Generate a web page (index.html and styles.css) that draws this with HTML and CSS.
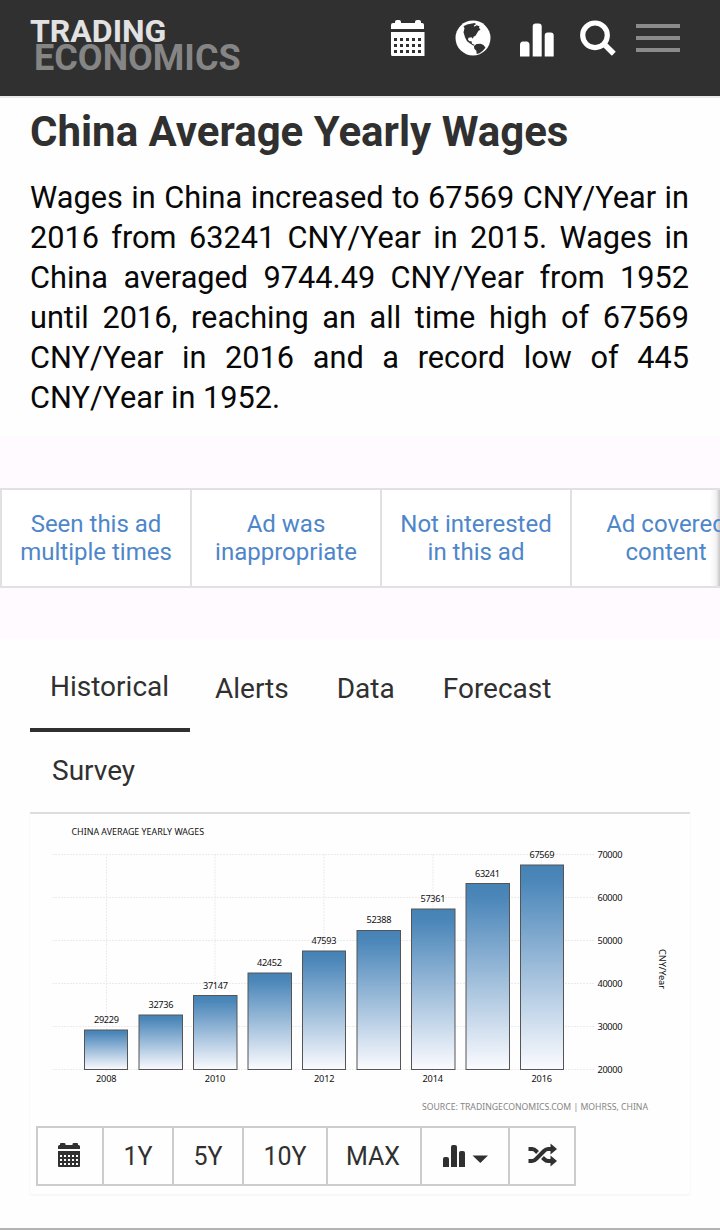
FILE: index.html
```html
<!DOCTYPE html>
<html lang="en">
<head>
<meta charset="utf-8">
<title>China Average Yearly Wages</title>
<link rel="stylesheet" href="styles.css">
</head>
<body>
<header class="topbar">
  <div class="logo"><span class="logo-top">TRADING</span><span class="logo-bottom">ECONOMICS</span></div>
  <nav class="top-icons">
    <svg class="i-cal" width="34" height="37" viewBox="0 0 34 37" fill="#fff"><path d="M0 9V5q0-2 2-2h2V2q0-2 2-2h2q2 0 2 2v1h14V2q0-2 2-2h2q2 0 2 2v1h1q2 0 2 2v4z"/><path fill-rule="evenodd" d="M0 12h33.500V36H1.500Q0 36 0 34.500zM3 18v3h3v-3zm6 0v3h3v-3zm6 0v3h3v-3zm6 0v3h3v-3zm6 0v3h3v-3zM3 24v3h3v-3zm6 0v3h3v-3zm6 0v3h3v-3zm6 0v3h3v-3zm6 0v3h3v-3zM3 30v3h3v-3zm6 0v3h3v-3zm6 0v3h3v-3zm6 0v3h3v-3zm6 0v3h3v-3z"/></svg>
    <svg class="i-globe" width="36" height="36" viewBox="0 0 36 36"><circle cx="18" cy="18" r="17.500" fill="#fff"/><path fill="#303030" d="M9 6l3-1.500 5-1 3-.5 1 1.200-2 1 .5 1.500 2-1.500 3 1-.5 1.500 1.500 2-2 1-1.500 2.500-1.500 2.500-2 1-.5 2-1.500-1.500-3 .5-.5 2 1.500 1.500 2 0 .5 2.500 2.500 1-1 1-3-2-3.500-2.500-2-4-1.500-5 1-4-1-2z"/><path fill="#303030" d="M19 26l2.500-2 4-.3 3 1.300 2 2.700-3 3.300-3 2.200-2.800.8-.3-3-2.200-2.500z"/></svg>
    <svg class="i-bars" width="34" height="34" viewBox="0 0 34 34" fill="#fff"><path d="M0 33.500V22q0-3.500 3-3.500h3.500q3 0 3 3.500v11.500zM12.700 33.500V3.500q0-3 3-3h3q3 0 3 3v30zM24.700 33.500v-21q0-3 3-3h3q3 0 3 3v21z"/></svg>
    <svg class="i-search" width="38" height="38" viewBox="0 0 38 38"><circle cx="15" cy="15.300" r="12.300" fill="none" stroke="#fff" stroke-width="5.200"/><path d="M23.500 23.500l10.300 10.300" stroke="#fff" stroke-width="5.500" stroke-linecap="butt"/></svg>
    <span class="burger"><i></i><i></i><i></i></span>
  </nav>
</header>

<h1 class="title">China Average Yearly Wages</h1>
<p class="summary">Wages in China increased to 67569 CNY/Year in 2016 from 63241 CNY/Year in 2015. Wages in China averaged 9744.49 CNY/Year from 1952 until 2016, reaching an all time high of 67569 CNY/Year in 2016 and a record low of 445 CNY/Year in 1952.</p>

<section class="ad">
  <div class="ad-row">
    <a class="ad-cell">Seen this ad<br>multiple times</a>
    <a class="ad-cell">Ad was<br>inappropriate</a>
    <a class="ad-cell">Not interested<br>in this ad</a>
    <a class="ad-cell">Ad covered<br>content</a>
  </div>
</section>

<nav class="tabs">
  <a class="tab active">Historical</a><a class="tab t-alerts">Alerts</a><a class="tab t-data">Data</a><a class="tab t-forecast">Forecast</a><a class="tab t-survey">Survey</a>
</nav>

<section class="panel">
  <svg class="chart" width="660" height="312" viewBox="30 814 660 312">
    <defs><linearGradient id="bar" x1="0" y1="0" x2="0" y2="1"><stop offset="0" stop-color="#4682b4"/><stop offset=".08" stop-color="#4c87ba"/><stop offset="1" stop-color="#fbfbff"/></linearGradient></defs>
    <g class="grid">
      <path d="M52 854.500H595M52 897.500H595M52 940.500H595M52 983.500H595M52 1026.500H595M52 1069.500H595"/>
      <path d="M106.500 854V1072M215 854V1072M324 854V1072M433 854V1072M541.500 854V1072"/>
    </g>
    <g class="bars">
      <rect x="84.500" y="1030" width="43" height="39.500"/>
      <rect x="139" y="1015" width="43.500" height="54.500"/>
      <rect x="193.500" y="995.500" width="43.500" height="74"/>
      <rect x="248" y="973" width="43.500" height="96.500"/>
      <rect x="302.500" y="951" width="43" height="118.500"/>
      <rect x="357" y="930.500" width="43.500" height="139"/>
      <rect x="411.500" y="909" width="43.500" height="160.500"/>
      <rect x="466" y="883.500" width="43.500" height="186"/>
      <rect x="520.500" y="865" width="43" height="204.500"/>
    </g>
    <text class="lbl" x="71.500" y="834.500" textLength="132.500" lengthAdjust="spacingAndGlyphs">CHINA AVERAGE YEARLY WAGES</text>
    <g class="lbl">
      <text x="94" y="1023" textLength="25">29229</text>
      <text x="148.500" y="1008" textLength="25">32736</text>
      <text x="203" y="989" textLength="25">37147</text>
      <text x="257" y="966" textLength="25">42452</text>
      <text x="311.500" y="944" textLength="25">47593</text>
      <text x="366.500" y="923" textLength="25">52388</text>
      <text x="420.500" y="902" textLength="25">57361</text>
      <text x="475" y="877" textLength="25">63241</text>
      <text x="529.500" y="858" textLength="25">67569</text>
      <text x="96" y="1082" textLength="20.500">2008</text>
      <text x="204.800" y="1082" textLength="20.500">2010</text>
      <text x="314" y="1082" textLength="20.500">2012</text>
      <text x="422.500" y="1082" textLength="20.500">2014</text>
      <text x="531.500" y="1082" textLength="20.500">2016</text>
      <text x="597.500" y="857.500" textLength="25">70000</text>
      <text x="597.500" y="900.500" textLength="25">60000</text>
      <text x="597.500" y="943.500" textLength="25">50000</text>
      <text x="597.500" y="986.500" textLength="25">40000</text>
      <text x="597.500" y="1029.500" textLength="25">30000</text>
      <text x="597.500" y="1072.500" textLength="25">20000</text>
      <text transform="translate(659 949) rotate(90)" textLength="40">CNY/Year</text>
    </g>
    <text class="src" x="422" y="1109.500" textLength="226" lengthAdjust="spacingAndGlyphs">SOURCE: TRADINGECONOMICS.COM | MOHRSS, CHINA</text>
  </svg>
  <div class="ranges">
    <span class="btn b-cal"><svg width="22" height="24" viewBox="0 0 22 24" fill="#303030"><path d="M0 6V3.500Q0 2 1.500 2H2V1q0-1 1-1h3q1.500 0 1.500 1v1h7V1q0-1 1.500-1h3q1 0 1 1v1h.5Q22 2 22 3.500V6z"/><path fill-rule="evenodd" d="M0 8h22v15q0 1-1 1H1q-1 0-1-1zM2 12v2h2v-2zm4 0v2h2v-2zm4 0v2h2v-2zm4 0v2h2v-2zm4 0v2h2v-2zM2 16v2h2v-2zm4 0v2h2v-2zm4 0v2h2v-2zm4 0v2h2v-2zm4 0v2h2v-2zM2 20v2h2v-2zm4 0v2h2v-2zm4 0v2h2v-2zm4 0v2h2v-2zm4 0v2h2v-2z"/></svg></span>
    <span class="btn b-1y">1Y</span>
    <span class="btn b-5y">5Y</span>
    <span class="btn b-10y">10Y</span>
    <span class="btn b-max">MAX</span>
    <span class="btn b-type"><svg width="46" height="24" viewBox="0 0 46 24" fill="#303030"><path d="M1 23V15q0-2 2-2h2q2 0 2 2v8zM9 23V3q0-2 2-2h2q2 0 2 2v20zM17 23V9q0-2 2-2h2q2 0 2 2v14zM30.500 11.500H46l-7.700 7.500z"/></svg></span>
    <span class="btn b-mix"><svg width="29" height="24" viewBox="0 0 29 24"><path fill="none" stroke="#303030" stroke-width="4" d="M.5 6H4q2.500 0 4 2l1.500 1.500M.5 18H4q2.500 0 4-2l8-8q2-2 4-2h3M14.500 14.500L16 16q2 2 4 2h3"/><path fill="#303030" d="M22.500 .5L29 6 22.500 11.500zM22.500 12.500L29 18 22.500 23.500z"/></svg></span>
  </div>
</section>
<footer class="page-end"></footer>
</body>
</html>
```
FILE: styles.css
```css
* { box-sizing: border-box; }
body { margin: 0; width: 720px; height: 1230px; overflow: hidden; background: #fefefe; font-family: Roboto, sans-serif; color: #303030; display: flex; flex-direction: column; }
.topbar { height: 98px; flex: none; background: #303030; border-bottom: 2px solid #e9e9e9; padding: 0 40px 0 30px; display: flex; justify-content: space-between; align-items: flex-start; }
.logo { display: flex; flex-direction: column; font-weight: 700; padding-top: 18px; white-space: nowrap; }
.logo-top { font-size: 32px; line-height: 26px; color: #e2e2e2; }
.logo-bottom { font-size: 36px; line-height: 28px; color: #858585; padding-left: 4px; }
.top-icons { display: flex; align-items: flex-start; }
.i-cal { margin-top: 20px; }
.i-globe { margin: 20px 0 0 29.5px; }
.i-bars { margin: 22.5px 0 0 29.5px; }
.i-search { margin: 20px 0 0 26px; }
.burger { display: flex; flex-direction: column; gap: 8px; margin: 24px 0 0 18px; }
.burger i { width: 44px; height: 4px; background: #8b8b8b; }
.title { margin: 10px 0 0 30px; font-size: 42px; line-height: 48px; font-weight: 700; white-space: nowrap; }
.summary { margin: 22px 31px 0 30px; height: 258px; font-size: 30.7px; line-height: 40px; color: #080808; text-align: justify; }
.ad { flex: none; height: 203px; background: #fefaff; padding-top: 52px; overflow: hidden; }
.ad-row { display: flex; width: 762px; height: 100px; background: linear-gradient(90deg, #fff 708px, #f4f2f4 714px, #bbb 719px); border: 2px solid #e2e0e2; }
.ad-cell { flex: none; width: 190px; border-right: 2px solid #e2e0e2; text-align: center; font-size: 24px; line-height: 28px; padding-top: 20px; color: #4e86ca; }
.tabs { flex: none; margin: 0 30px; height: 175px; display: flex; flex-wrap: wrap; align-content: flex-start; border-bottom: 2px solid #ddd; font-size: 28px; line-height: 34px; }
.tab { height: 93px; padding-top: 33px; }
.active { width: 160px; padding: 31px 0 0 20px; border-bottom: 4px solid #303030; }
.t-alerts { margin-left: 25px; }
.t-data { margin-left: 48px; }
.t-forecast { margin-left: 48px; width: 160px; }
.t-survey { padding: 22px 0 0 22px; }
.panel { flex: none; margin: 0 29px; height: 382px; border: 1px solid #fafafa; border-top: 0; border-bottom: 2px solid #f7f7f7; border-radius: 0 0 4px 4px; }
.chart { display: block; }
.grid path { stroke: #ebebeb; stroke-width: 1; stroke-dasharray: 2 1; fill: none; }
.bars rect { fill: url(#bar); stroke: #555; stroke-width: 1; }
.lbl { font: 9.2px "Noto Sans", sans-serif; fill: #111; }
.src { font: 9.2px "Noto Sans", sans-serif; fill: #858585; }
.ranges { display: flex; margin-left: 6px; width: 540px; height: 60px; border: 2px solid #ccc; font-size: 25px; }
.btn { display: flex; align-items: center; justify-content: center; border-right: 2px solid #ccc; }
.btn:last-child { border-right: 0; }
.b-cal { width: 66px; padding-right: 2px; }
.b-1y, .b-5y { width: 70px; }
.b-10y { width: 84px; }
.b-max { width: 94px; padding-right: 2px; }
.b-type { width: 88px; }
.b-mix { width: 64px; }
.b-cal svg, .b-mix svg { margin-bottom: 3px; }
.page-end { margin-top: 32px; height: 2px; flex: none; background: #b4b4b4; }
```
